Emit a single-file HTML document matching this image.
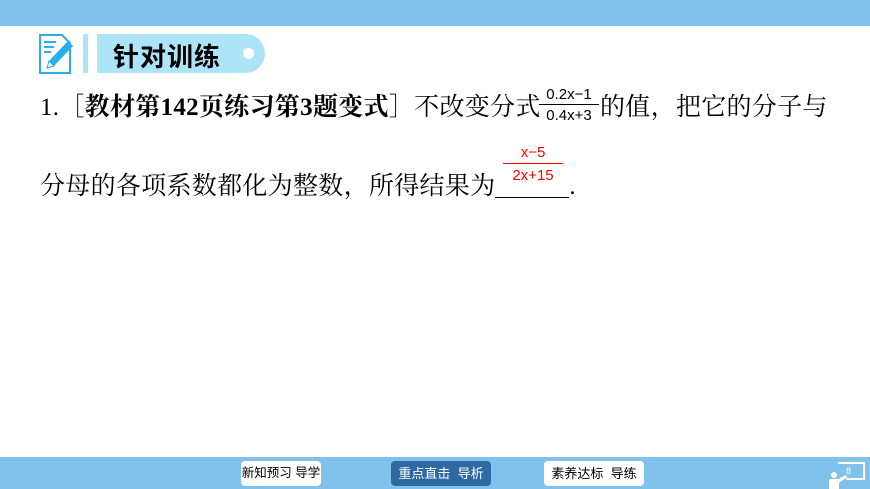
<!DOCTYPE html>
<html><head><meta charset="utf-8"><style>
body{margin:0;width:870px;height:489px;position:relative;background:#fff;overflow:hidden;font-family:"Liberation Serif","Noto Serif CJK SC",serif;}
.top{position:absolute;left:0;top:0;width:870px;height:26px;background:#80c2eb;}
.bot{position:absolute;left:0;top:457px;width:870px;height:32px;background:#80c2eb;}
.btn{position:absolute;top:461px;height:25px;border-radius:4px;background:#fff;font:13px "Liberation Sans","Noto Sans CJK SC",sans-serif;line-height:25px;text-align:center;color:#000;white-space:nowrap;}
.t{position:absolute;font-size:25px;letter-spacing:0.3px;white-space:nowrap;}
.fr{position:absolute;font:15px "Liberation Sans","Noto Sans CJK SC",sans-serif;text-align:center;}
</style></head><body>
<div class="top"></div>
<svg style="position:absolute;left:38px;top:33px" width="38" height="42" viewBox="0 0 38 42">
<path d="M2 2H24L32 10V40H2Z" fill="#fff" stroke="#29aee8" stroke-width="2"/>
<path d="M6 9H18M6 14H16M6 19H13" stroke="#29aee8" stroke-width="2"/>
<path d="M30 8L35 13L16 33L9 35L11 28Z" fill="#29aee8"/>
<path d="M11 28L16 33L9 35Z" fill="#fff" stroke="#29aee8"/>
</svg>
<div style="position:absolute;left:83px;top:34px;width:5px;height:39px;background:#aee4f8"></div>
<div style="position:absolute;left:97px;top:34px;width:168px;height:39px;background:#aee4f8;border-radius:0 20px 20px 0"></div>
<div style="position:absolute;left:243px;top:48px;width:11px;height:11px;border-radius:50%;background:#fff"></div>
<div style="position:absolute;left:113px;top:37px;font:bold 26px 'Noto Sans CJK SC',sans-serif;color:#000;letter-spacing:1px">针对训练</div>
<div class="t" style="left:40px;top:87px">1.［<b>教材第142页练习第3题变式</b>］不改变分式</div>
<div class="fr" style="left:539px;top:85px;width:60px;line-height:19px">0.2x−1<div style="border-top:1.5px solid #000;line-height:21px">0.4x+3</div></div>
<div class="t" style="left:600px;top:87px">的值，把它的分子与</div>
<div class="t" style="left:40px;top:166px">分母的各项系数都化为整数，所得结果为<span style="display:inline-block;width:74px;border-bottom:1px solid #000;height:26px;vertical-align:-4px"></span>.</div>
<div class="fr" style="left:503px;top:143px;width:60px;color:#f00;line-height:20px">x−5<div style="border-top:1.5px solid #f00;line-height:24px">2x+15</div></div>
<div class="bot"></div>
<div class="btn" style="left:241px;width:80px;font-size:12.5px">新知预习 导学</div>
<div class="btn" style="left:391px;width:100px;background:#2e6aa1;color:#fff">重点直击&nbsp; 导析</div>
<div class="btn" style="left:544px;width:100px">素养达标&nbsp; 导练</div>
<svg style="position:absolute;left:826px;top:461px" width="40" height="28" viewBox="0 0 40 28">
<path d="M12 2H38V18H20" fill="none" stroke="#fff" stroke-width="2"/>
<text x="20" y="13" font-size="9" fill="#fff" font-family="Liberation Sans">8</text>
<circle cx="8" cy="14" r="3" fill="#fff"/>
<path d="M3 28V20Q3 18 6 18H12L20 14L21 16L13 22V28Z" fill="#fff"/>
</svg>
</body></html>
